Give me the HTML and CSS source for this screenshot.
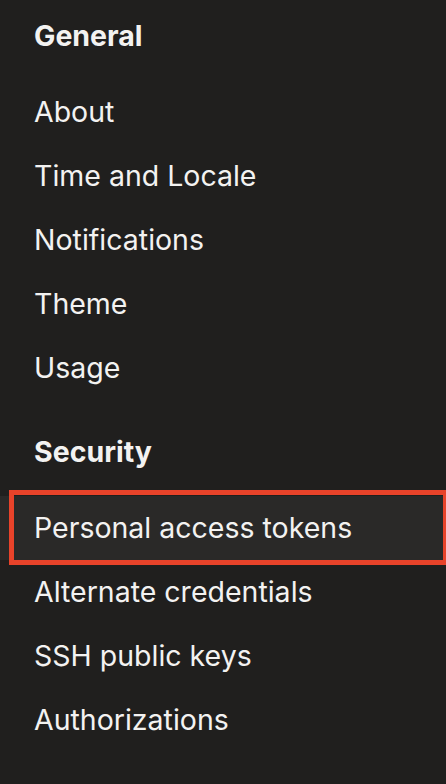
FILE: index.html
```html
<!DOCTYPE html>
<html lang="en">
<head>
<meta charset="utf-8">
<link rel="stylesheet" href="styles.css">
<title>Settings</title>
</head>
<body>
<nav class="nav">
  <section class="group">
    <h2 class="group-title">General</h2>
    <ul class="items">
      <li class="item">About</li>
      <li class="item">Time and Locale</li>
      <li class="item">Notifications</li>
      <li class="item">Theme</li>
      <li class="item">Usage</li>
    </ul>
  </section>
  <section class="group">
    <h2 class="group-title">Security</h2>
    <ul class="items">
      <li class="item item-selected">Personal access tokens</li>
      <li class="item">Alternate credentials</li>
      <li class="item">SSH public keys</li>
      <li class="item">Authorizations</li>
    </ul>
  </section>
</nav>
</body>
</html>
```

FILE: styles.css
```css
html, body {
  margin: 0;
  padding: 0;
  background: #201f1e;
  overflow: hidden;
}
body {
  width: 446px;
  height: 784px;
  font-family: Inter, "Noto Sans", sans-serif;
  color: #f3f2f1;
}
.nav {
  display: flex;
  flex-direction: column;
  gap: 16px;
}
.group-title {
  margin: 0;
  padding: 4px 0 12px 34px;
  font-size: 28.5px;
  font-weight: 700;
  line-height: 64px;
}
.items {
  list-style: none;
  margin: 0;
  padding: 0;
}
.item {
  position: relative;
  height: 64px;
  line-height: 64px;
  padding-left: 34px;
  font-size: 28.5px;
  font-weight: 400;
  white-space: nowrap;
}
.item-selected {
  background: #2a2928;
}
.item-selected::after {
  content: "";
  position: absolute;
  left: 9px;
  top: -6px;
  width: 439px;
  bottom: -5px;
  border: 5px solid #e8432a;
  box-sizing: border-box;
}
```
